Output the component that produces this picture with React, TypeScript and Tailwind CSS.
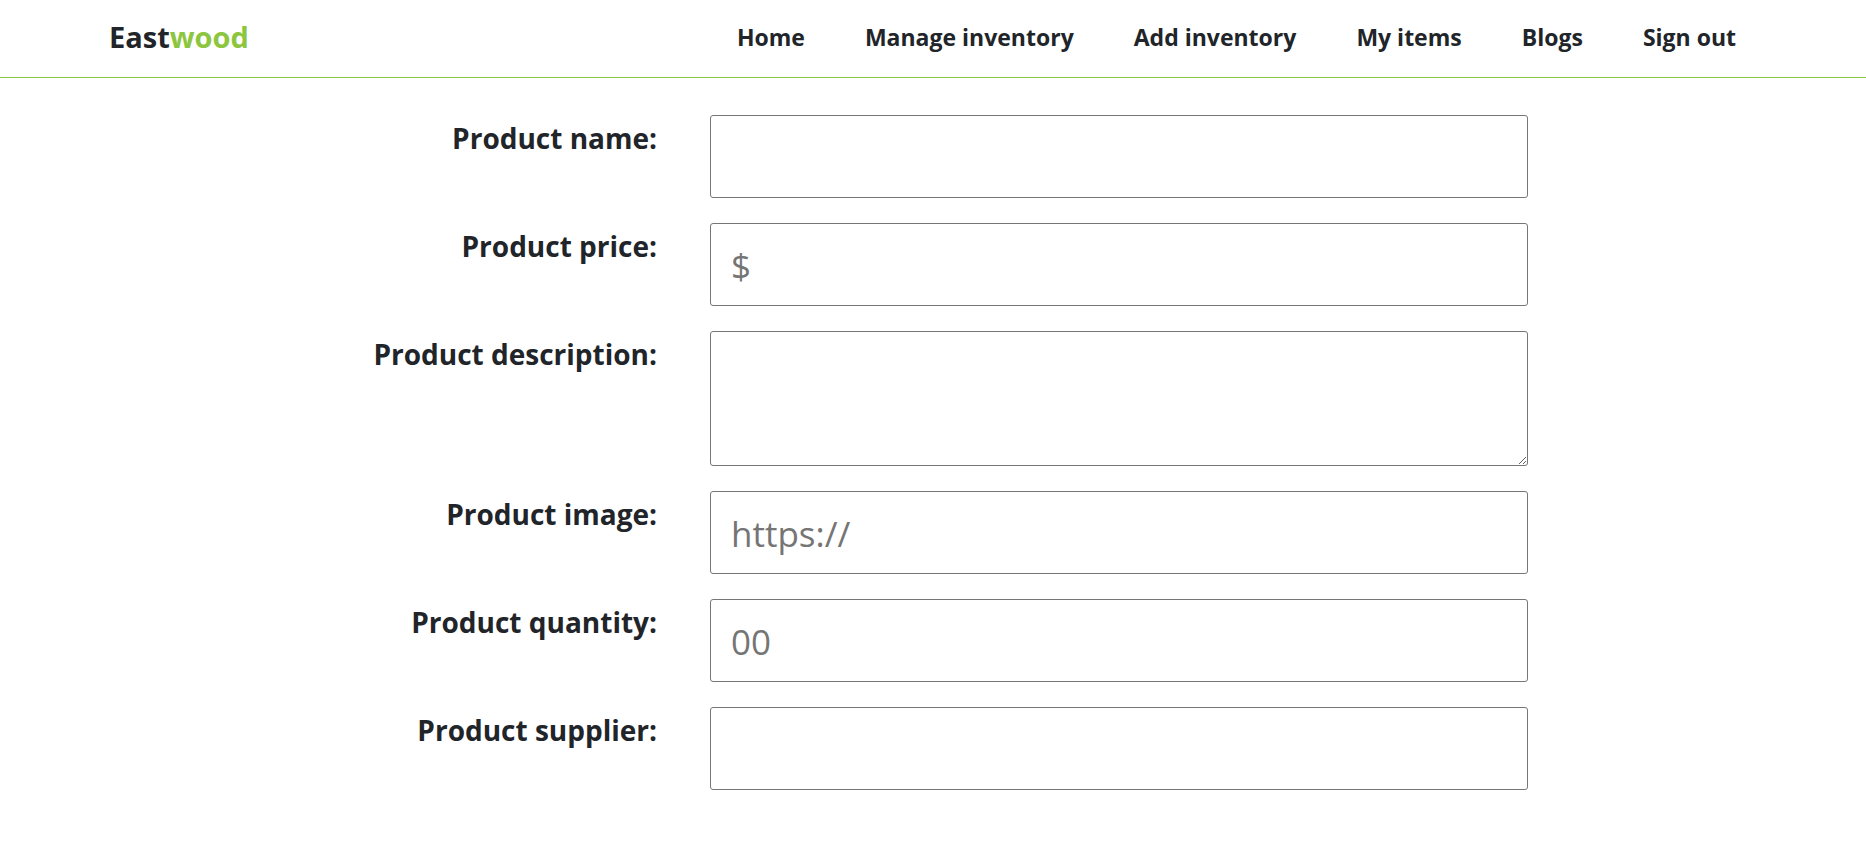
const navLinks = ["Home", "Manage inventory", "Add inventory", "My items", "Blogs", "Sign out"];

const fields = [
  { label: "Product name:", placeholder: "", type: "text" },
  { label: "Product price:", placeholder: "$", type: "text" },
  { label: "Product description:", placeholder: "", type: "textarea" },
  { label: "Product image:", placeholder: "https://", type: "text" },
  { label: "Product quantity:", placeholder: "00", type: "text" },
  { label: "Product supplier:", placeholder: "", type: "text" },
];

export default function App() {
  return (
    <div className="min-h-screen bg-white text-[#212529] font-['Open_Sans',sans-serif]">
      {/* HEADER */}
      <header className="h-[78px] flex items-center justify-between pl-[109px] pr-[100px] border-b border-[#8cc63f]">
        <a className="text-[29px] font-bold -mt-[4px]">
          East<span className="text-[#8cc63f]">wood</span>
        </a>

        <nav className="flex items-center -mt-[3px]">
          {navLinks.map((link) => (
            <a key={link} className="px-[30px] text-[23px] font-bold">
              {link}
            </a>
          ))}
        </nav>
      </header>

      {/* FORM */}
      <form className="w-[1190px] mx-auto pt-[37px] grid grid-cols-[319px_818px] gap-x-[53px] gap-y-[25px]">
        {fields.map((field) => (
          <div key={field.label} className="contents">
            <label className="text-right text-[28px] font-bold pt-[7px] leading-[1.2]">
              {field.label}
            </label>
            {field.type === "textarea" ? (
              <textarea
                placeholder={field.placeholder}
                className="h-[135px] w-full border border-[#767676] rounded-[3px] px-5 py-2 text-[35px] outline-none placeholder:text-[#757575]"
              />
            ) : (
              <input
                type="text"
                placeholder={field.placeholder}
                className="h-[83px] w-full border border-[#767676] rounded-[3px] px-5 pt-[2px] text-[35px] outline-none placeholder:text-[#757575]"
              />
            )}
          </div>
        ))}
      </form>
    </div>
  );
}
